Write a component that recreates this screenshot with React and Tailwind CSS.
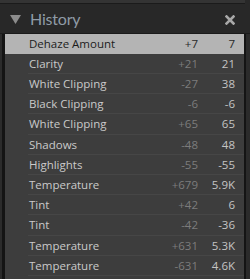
import React from 'react'

const rows = [
  { name: 'Dehaze Amount', from: '+7', to: '7', active: true },
  { name: 'Clarity', from: '+21', to: '21' },
  { name: 'White Clipping', from: '-27', to: '38' },
  { name: 'Black Clipping', from: '-6', to: '-6' },
  { name: 'White Clipping', from: '+65', to: '65' },
  { name: 'Shadows', from: '-48', to: '48' },
  { name: 'Highlights', from: '-55', to: '-55' },
  { name: 'Temperature', from: '+679', to: '5.9K' },
  { name: 'Tint', from: '+42', to: '6' },
  { name: 'Tint', from: '-42', to: '-36' },
  { name: 'Temperature', from: '+631', to: '5.3K' },
  { name: 'Temperature', from: '-631', to: '4.6K' },
]

export default function App() {
  return (
    <div
      className="flex h-[279px] w-[250px] flex-col overflow-hidden bg-[#282828]"
      style={{ fontFamily: '"Open Sans", "Noto Sans", sans-serif' }}
    >
      {/* top strip from the panel above */}
      <div className="mr-[5px] h-[4px] border-b border-[#1b1b1b] bg-[#343434]" />

      {/* header */}
      <div className="flex h-[30px] items-center border-b border-[#1b1b1b] pl-[10px] pr-[15px]">
        <svg width="11" height="9" viewBox="0 0 11 9" className="mt-[2px]">
          <polygon points="0,0 11,0 5.5,9" fill="#8c8c8c" />
        </svg>
        <span
          className="ml-[9px] text-[16px] leading-none tracking-[-0.2px] text-[#8f9ba6]"
          style={{ fontFamily: 'Lato, sans-serif' }}
        >
          History
        </span>
        <div className="flex-1" />
        <svg width="10" height="10" viewBox="0 0 10 10" className="mt-[2px]">
          <path d="M1.5 1.5 L8.5 8.5 M8.5 1.5 L1.5 8.5" stroke="#a8a8a8" strokeWidth="2.6" strokeLinecap="square" />
        </svg>
      </div>

      {/* list */}
      <div className="flex flex-1">
        <div className="w-[2px] bg-[#2b2b2b]" />
        <div className="w-[3px] bg-[#141414]" />
        <div className="flex w-[239px] flex-col bg-[#3d3d3d]">
          {rows.map((r, i) => (
            <div
              key={i}
              className={`flex h-[20px] shrink-0 items-center text-[11.5px] ${
                i % 5 === 4 ? 'h-[21px]' : ''
              } ${r.active ? 'bg-[#b4b4b4]' : ''}`}
            >
              <div
                className={`ml-[23px] flex h-full flex-1 items-center pl-[1px] ${
                  r.active ? '' : 'border-b border-[#464646]'
                }`}
              >
                <span className={r.active ? 'text-[#1c1c1c]' : 'text-[#cacaca]'}>{r.name}</span>
                <div className="flex-1" />
                <span className={`w-[40px] text-right ${r.active ? 'text-[#2a2a2a]' : 'text-[#7c7c7c]'}`}>
                  {r.from}
                </span>
                <span className={`w-[37px] text-right ${r.active ? 'text-[#2a2a2a]' : 'text-[#c4c4c4]'}`}>
                  {r.to}
                </span>
                <div className="w-[9px]" />
              </div>
            </div>
          ))}
        </div>
        <div className="w-[2px] bg-[#141414]" />
        <div className="flex-1 bg-[#2b2b2b]" />
      </div>
    </div>
  )
}
